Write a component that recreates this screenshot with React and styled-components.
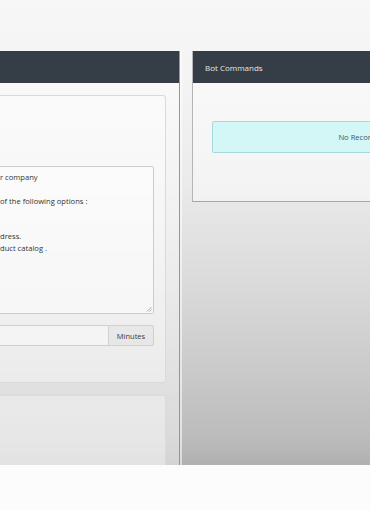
import React from "react";
import styled, { createGlobalStyle } from "styled-components";

const Global = createGlobalStyle`
  html, body { margin: 0; padding: 0; background: #fcfcfc; overflow: hidden; }
  #root { width: 370px; height: 510px; overflow: hidden; }
  * { box-sizing: border-box; }
`;

const Stage = styled.div`
  height: 465px;
  padding-top: 51px;
  display: flex;
  gap: 12px;
  overflow: hidden;
  font-family: "Open Sans", "Noto Sans", sans-serif;
  background: linear-gradient(
    to bottom,
    #f7f7f7 0px,
    #f3f3f3 90px,
    #ebebeb 180px,
    #dbdbdb 280px,
    #cacaca 370px,
    #bbbbbb 440px,
    #b0b0b0 465px
  );
`;

const Panel = styled.section`
  flex: 0 0 ${(p) => p.$w}px;
  display: flex;
  flex-direction: column;
  align-self: ${(p) => (p.$full ? "stretch" : "flex-start")};
  border-right: ${(p) => (p.$full ? "1px solid #969696" : "none")};
  border-left: ${(p) => (p.$full ? "none" : "1px solid #b5b5b5")};
  border-bottom: ${(p) => (p.$full ? "none" : "1px solid #a6a6a6")};
  box-shadow: ${(p) => (p.$full ? "2px 0 0 rgba(255,255,255,0.55)" : "none")};
`;

const Header = styled.div`
  height: 32px;
  flex: 0 0 32px;
  background: #353e46;
  color: #e4e7e9;
  font-size: 8px;
  display: flex;
  align-items: center;
  padding-left: 12px;
`;

const Body = styled.div`
  flex: 1;
  background: rgba(255, 255, 255, 0.45);
  padding: ${(p) => p.$pad};
  display: flex;
  flex-direction: column;
  gap: 12px;
  overflow: hidden;
`;

const Card = styled.div`
  border: 1px solid #dadada;
  border-left: none;
  border-radius: 0 3px 3px 0;
  background: rgba(255, 255, 255, 0.35);
  height: ${(p) => p.$h}px;
  flex: 0 0 ${(p) => p.$h}px;
  padding: ${(p) => p.$pad || "0"};
  display: flex;
  flex-direction: column;
  gap: 11px;
`;

const TextArea = styled.div`
  position: relative;
  height: 148px;
  border: 1px solid #cbcbcb;
  border-left: none;
  border-radius: 0 2px 2px 0;
  background: rgba(255, 255, 255, 0.45);
  padding: 5px 0 0 0;
  font-size: 7.6px;
  line-height: 11.8px;
  color: #333;
`;

const Line = styled.div`
  height: 11.8px;
  white-space: nowrap;
`;

const Grip = styled.svg`
  position: absolute;
  right: 1px;
  bottom: 1px;
`;

const InputGroup = styled.div`
  display: flex;
  height: 21px;
`;

const Input = styled.div`
  flex: 1;
  border: 1px solid #d0d0d0;
  border-left: none;
  border-right: none;
  background: rgba(255, 255, 255, 0.35);
`;

const Addon = styled.div`
  flex: 0 0 46px;
  border: 1px solid #d0d0d0;
  border-radius: 0 2px 2px 0;
  background: rgba(225, 225, 225, 0.55);
  color: #3a3a3a;
  font-size: 7.5px;
  display: flex;
  align-items: center;
  justify-content: center;
`;

const Alert = styled.div`
  width: 318px;
  height: 32px;
  margin-top: 38px;
  border: 1px solid #a6dada;
  border-radius: 2px;
  background: #d3f6f6;
  color: #3a5c5e;
  font-size: 7.6px;
  display: flex;
  align-items: center;
  justify-content: center;
  white-space: nowrap;
`;

export default function App() {
  return (
    <>
      <Global />
      <Stage>
        <Panel $w={180} $full>
          <Header />
          <Body $pad="12px 13px 0 0">
            <Card $h={288} $pad="70px 11px 0 0">
              <TextArea>
                <Line>r company</Line>
                <Line />
                <Line>of the following options :</Line>
                <Line />
                <Line />
                <Line>dress.</Line>
                <Line>duct catalog .</Line>
                <Grip width="6" height="6" viewBox="0 0 6 6">
                  <path d="M5.5 1 L1 5.5 M5.5 3.5 L3.5 5.5" stroke="#9a9a9a" strokeWidth="0.8" />
                </Grip>
              </TextArea>
              <InputGroup>
                <Input />
                <Addon>Minutes</Addon>
              </InputGroup>
            </Card>
            <Card $h={120} />
          </Body>
        </Panel>
        <Panel $w={360}>
          <Header>Bot Commands</Header>
          <Body $pad="0 0 48px 19px">
            <Alert>No Records Found</Alert>
          </Body>
        </Panel>
      </Stage>
    </>
  );
}
